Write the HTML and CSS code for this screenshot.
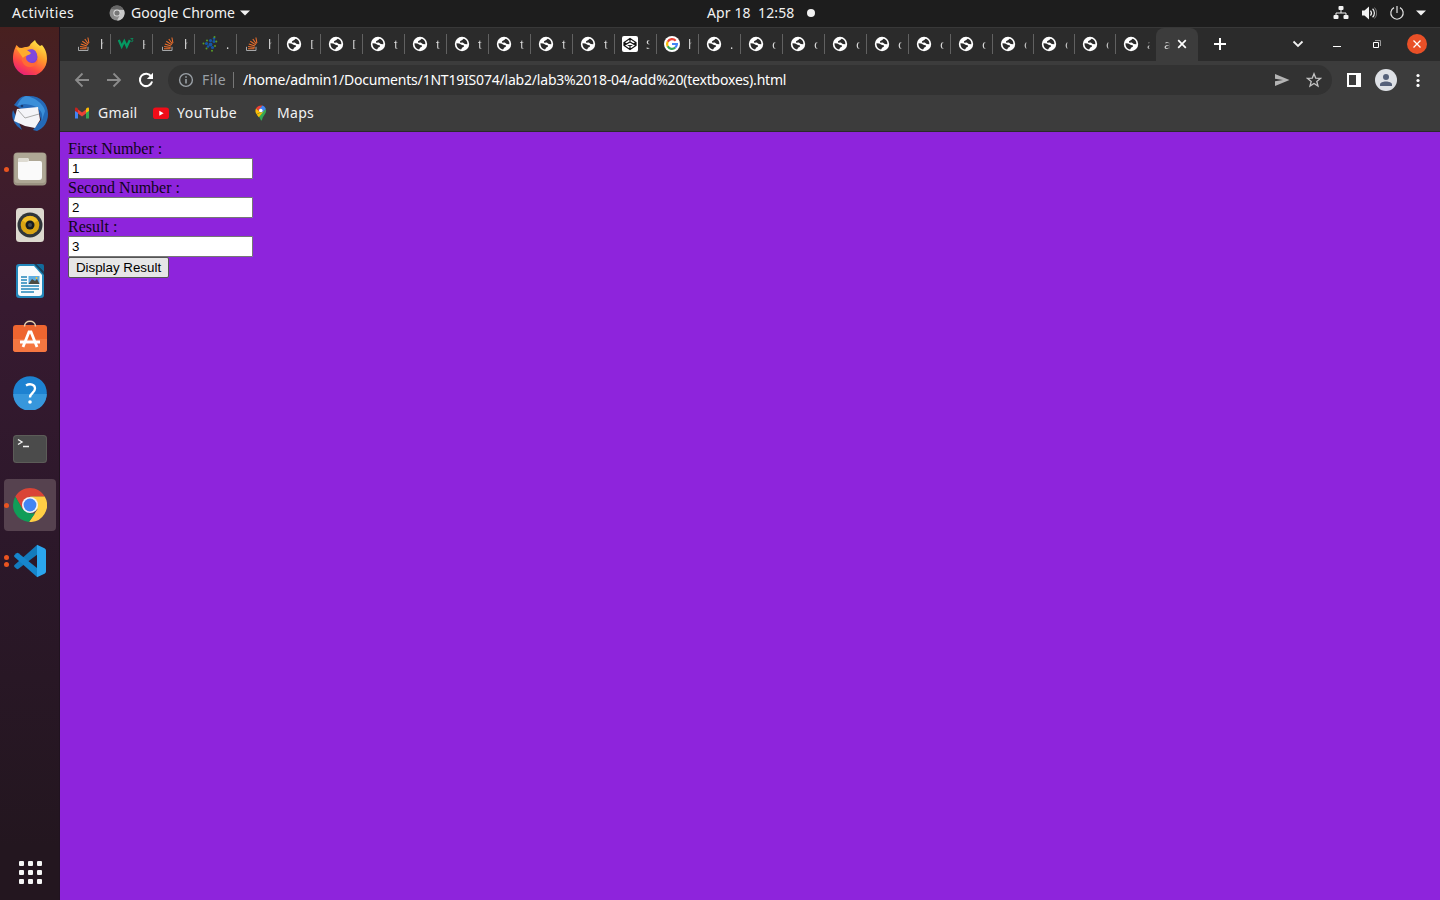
FILE: index.html
```html
<!DOCTYPE html>
<html lang="en">
<head>
<meta charset="utf-8">
<title>add (textboxes)</title>
<link rel="stylesheet" href="styles.css">
</head>
<body>
<svg class="defs" width="0" height="0">
  <symbol id="globe" viewBox="0 0 16 16"><circle cx="8" cy="8" r="7.200" fill="#fff"/><path d="M2.500 7.200 5.200 7.400 8 9l1.800.2.100 1.500-1.600.8-1.200 2C4.200 13 2.300 10.500 2.500 7.200z" fill="#2b2b2b"/><path d="M9.500 2.700 8.300 4 6 5.200l.2 1.500 2.500-.2L10.800 8l2.500.3C13.800 5.500 12 3.300 9.500 2.700z" fill="#2b2b2b"/></symbol>
  <symbol id="stack" viewBox="0 0 16 16"><path d="M2.500 10.800v3.700h9.500v-3.700" fill="none" stroke="#a5a7a9"/><path d="M4 12.700h6.500M4.100 10.600l6.600.8M4.800 8.100l6.200 2M6.300 5.300l5.500 3.600M8.800 3l3.600 5M11.900 1.500l1 5.500" stroke="#f0702c" stroke-width="1.050"/></symbol>
  <symbol id="w3" viewBox="0 0 16 16"><path d="M.8 4 3.700 10.500 6.300 5 8.800 10.500 11.800 4" fill="none" stroke="#059862" stroke-width="2.200"/><path d="M12.500 2.500H15l-1.300 1.500c2 0 1.500 2.300-1.200 1.500" fill="none" stroke="#059862" stroke-width=".8"/></symbol>
  <symbol id="dots" viewBox="0 0 16 16"><g fill="#1556a5"><circle cx="8.500" cy="4.500" r="1.600"/><circle cx="4.500" cy="7.500" r="1.600"/><circle cx="8.500" cy="8.500" r="1.900"/><circle cx="12" cy="5.500" r="1.500"/><circle cx="10.500" cy="11.500" r="1.600"/><circle cx="12" cy="2.500" r="1.300"/><circle cx="6" cy="10.500" r="1.300"/></g><g fill="#5a9c26"><circle cx="1.500" cy="7.500" r="1"/><circle cx="12.500" cy="1" r="1"/><circle cx="14.300" cy="5.500" r="1"/><circle cx="5" cy="4.500" r="1"/><circle cx="13" cy="10" r="1"/><circle cx="10" cy="14.800" r="1"/><circle cx="4.500" cy="12.500" r="1"/></g></symbol>
  <symbol id="codepen" viewBox="0 0 16 16"><rect width="16" height="16" rx="2" fill="#fff"/><path d="m8 2.500 6 4v3l-6 4-6-4v-3zm0 0v4m0 3v4M2 6.500 8 10l6-3.500M2 9.500 8 6l6 3.500" fill="none" stroke="#111" stroke-width="1.200"/></symbol>
  <symbol id="google" viewBox="0 0 16 16"><circle cx="8" cy="8" r="8" fill="#fff"/><g fill="none" stroke-width="2.200"><path d="M11.700 4.700A4.900 4.900 0 0 0 3.700 5.700" stroke="#ea4335"/><path d="M3.700 5.600a5 5 0 0 0 0 4.800" stroke="#fbbc05"/><path d="M3.700 10.300a4.900 4.900 0 0 0 7.500 1.400" stroke="#34a853"/><path d="M8 8h4.900a5 5 0 0 1-1.700 3.700" stroke="#4285f4"/></g></symbol>
</svg>

<header class="topbar">
  <span class="activities">Activities</span>
  <div class="appmenu">
    <svg width="16" height="16" viewBox="0 0 16 16"><circle cx="8" cy="8" r="7.500" fill="#8a8a8a"/><path d="M1.500 4A7.500 7.500 0 0 1 14.600 4.500H8z" fill="#666"/><path d="M15 5a7.500 7.500 0 0 1-7 10.500L11.500 9 10 5z" fill="#c8c8c8"/><circle cx="8" cy="8" r="3.600" fill="#ddd"/><circle cx="8" cy="8" r="2.600" fill="#777"/></svg>
    <span class="appname">Google Chrome</span>
    <svg class="caret" width="10" height="6" viewBox="0 0 10 6"><path d="M0 .5h10L5 5.500z" fill="#f2f2f2"/></svg>
  </div>
  <div class="clock"><span>Apr 18&nbsp; 12:58</span><i class="notice"></i></div>
  <div class="status">
    <svg width="16" height="16" viewBox="0 0 16 16"><path d="M8 4v4M3 12V8h10v4" fill="none" stroke="#f2f2f2"/><g fill="#f2f2f2"><rect x="5.500" y="1" width="5" height="4" rx="1"/><rect x="0.500" y="10" width="5" height="4" rx="1"/><rect x="10.500" y="10" width="5" height="4" rx="1"/></g></svg>
    <svg width="16" height="16" viewBox="0 0 16 16"><path d="M1 5.500h2.500L8 1.500v13l-4.500-4H1z" fill="#f2f2f2"/><path d="M9.500 5.500a4 4 0 0 1 0 5M11.600 3.700a6 6 0 0 1 0 8.600" fill="none" stroke="#f2f2f2" stroke-width="1.200"/><path d="M13.500 2.500a8 8 0 0 1 0 11" fill="none" stroke="#777"/></svg>
    <svg width="16" height="16" viewBox="0 0 16 16"><path d="M5 2.600a6.200 6.200 0 1 0 6 0M8 1v7" fill="none" stroke="#e2e2e2" stroke-width="1.200"/></svg>
    <svg class="caret" width="10" height="6" viewBox="0 0 10 6"><path d="M0 .5h10L5 5.500z" fill="#f2f2f2"/></svg>
  </div>
</header>

<div class="desktop">
  <nav class="dock">
    <div class="app"><svg width="36" height="36" viewBox="0 0 36 36"><defs><linearGradient id="ff" x1=".8" y1="0" x2=".25" y2="1"><stop offset="0" stop-color="#fff04a"/><stop offset=".4" stop-color="#ff9a2b"/><stop offset=".7" stop-color="#ff4b43"/><stop offset="1" stop-color="#e5197f"/></linearGradient></defs><path d="M4.500 6 8 9.500l5-1.500c3 .5 5-1 5.500-3L23 1c1 3 3 4 5 6l2-1c4 5 5 9 5 14A17 17 0 0 1 1 20C1 14 2 11 4.500 6z" fill="url(#ff)"/><circle cx="18" cy="18" r="7.500" fill="#7c3fd6"/><path d="M10 14l7 1c-4 5-1 9 3 9 3 0 5-2 6-4 0 5-4 8-8 8-6 0-10-6-8-14z" fill="#ff6a35"/><path d="M17 11c4-2 8 1 8 6s-4 6-7 6c-4-1-5-4-3-7z" fill="#8048dc"/><path d="M4 9c5-1 10 0 15 5-2 3-6 2-8 5z" fill="#ffac2d"/></svg></div>
    <div class="app"><svg width="38" height="38" viewBox="0 0 38 38"><path d="M3 11C8 5 9 2 16 2c13-1 21 7 21 18 0 8-4 14-11 17l-4-1 8-10-3-12-17 1z" fill="#2469b8"/><path d="M15 2c8 1 17 7 19 15l-4 12c4-10-1-18-17-19l-7 2C9 6 11 3 15 2z" fill="#3b8fd9"/><path d="M2 16c-2 6 0 11 4 16l5 4-3-7z" fill="#2469b8"/><path d="m6 15 21-2 2 13-5 8-10-2L3 27z" fill="#f4f4f8"/><path d="m7 16 7 8 14-4" fill="none" stroke="#aaa"/><circle cx="11" cy="12" r="1.300" fill="#183c70"/></svg></div>
    <div class="app one"><svg width="34" height="34" viewBox="0 0 34 34"><rect x=".5" y=".5" width="33" height="33" rx="4" fill="#9b9382"/><rect x="1.500" y="1" width="31" height="30" rx="3" fill="#aea795"/><path d="M5 8q0-2 2-2h7q2 0 2 3h11q2 0 2 2v14q0 3-3 3H8q-3 0-3-3z" fill="#fafafa"/><path d="M5 10V8q0-2 2-2h7q2 0 2 3l-2 1z" fill="#dedbd2"/></svg></div>
    <div class="app"><svg width="28" height="34" viewBox="0 0 28 34"><rect width="28" height="34" rx="3.500" fill="#ddd9cf"/><circle cx="14" cy="17" r="12.500" fill="#30363a"/><circle cx="14" cy="17" r="9.300" fill="#d9a413"/><path d="M14 17 6 12.500a9.300 9.300 0 0 1 16 0z" fill="#f0bd25"/><circle cx="14" cy="17" r="4.500" fill="#171c20"/><circle cx="14" cy="17" r="2" fill="#454b52"/></svg></div>
    <div class="app"><svg width="28" height="34" viewBox="0 0 28 34"><path d="M3 0h16l9 9v22q0 3-3 3H3q-3 0-3-3V3q0-3 3-3z" fill="#2387bb"/><path d="M4 2h14l8 9v18q0 3-3 3H5q-3 0-3-3V4q0-2 2-2z" fill="#f7fafc"/><path d="M20 0h6q2 0 2 2v6z" fill="#126a9b"/><path d="M18 0h2l8 8v3z" fill="#164461"/><path d="M5 13h6M5 16h6M5 19h6M5 22h18M5 25h18M5 28h13" stroke="#2385b8" stroke-width="1.500"/><rect x="12.500" y="12" width="11" height="8" fill="#5dade2"/><path d="m12.500 20 3.500-5 3 2 2-2 2.500 5z" fill="#4b4b43"/><circle cx="20.500" cy="14" r="1" fill="#f8c132"/></svg></div>
    <div class="app"><svg width="34" height="34" viewBox="0 0 34 34"><rect y="5" width="34" height="27" rx="3" fill="#ee6530"/><path d="M0 19h34v10q0 3-3 3H3q-3 0-3-3z" fill="#f57741"/><path d="M11.500 6.500c0-7 11-7 11 0" fill="none" stroke="#e9cfac" stroke-width="1.500"/><path d="m10 27 6-15h2l6 15M7 22h20" fill="none" stroke="#fff" stroke-width="2.800"/></svg></div>
    <div class="app"><svg width="34" height="34" viewBox="0 0 34 34"><circle cx="17" cy="17" r="16.800" fill="#1d82d1"/><path d="M.2 18h33.600a16.800 16.800 0 0 1-33.600 0z" fill="#3797dc"/><path d="M13 9.500c4-2.500 9-1 9 3 0 5-5 4-5 9" fill="none" stroke="#fff" stroke-width="2.300"/><circle cx="17" cy="26" r="1.800" fill="#fff"/></svg></div>
    <div class="app"><svg width="34" height="28" viewBox="0 0 34 28"><rect width="34" height="28" rx="3.500" fill="#5c5c58"/><rect x="1" y="1" width="32" height="26" rx="3" fill="#4b4b4b"/><path d="m5 4.500 4 2.500-4 2.500M10 11.500h6" fill="none" stroke="#f3f3f3" stroke-width="1.400"/></svg></div>
    <div class="app one active"><svg width="34" height="34" viewBox="0 0 34 34"><path d="M2.300 8.500A17 17 0 0 1 31.700 8.500H17L9.600 21.300z" fill="#da4437"/><path d="M31.700 8.500A17 17 0 0 1 16 34l8.400-12.700L17 8.500z" fill="#ffce45"/><path d="M2.300 8.500 9.600 21.300 17 25.500h5L16 34A17 17 0 0 1 2.300 8.500z" fill="#109d58"/><circle cx="17" cy="17" r="8" fill="#f4f4f4"/><circle cx="17" cy="17" r="6.400" fill="#4285f4"/></svg></div>
    <div class="app two"><svg width="34" height="34" viewBox="0 0 34 34"><path d="M24 1 1.500 21q-1 1 0 2l2 1.800q1 .7 2 0L25 10z" fill="#137bbd"/><path d="M5.500 9.200q-1-.7-2 0l-2 1.800q-1 1 0 2L24 33V24z" fill="#1686cd"/><path d="m24 .8 7.500 3.500Q33 5 33 6.500v21q0 1.500-1.500 2.200L24 33.300z" fill="#2ba5ee"/></svg></div>
    <div class="launcher"><i></i><i></i><i></i><i></i><i></i><i></i><i></i><i></i><i></i></div>
  </nav>

  <main class="browser">
    <div class="tabstrip">
      <div class="tab"><svg><use href="#stack"/></svg><span>h</span></div>
      <div class="tab"><svg><use href="#w3"/></svg><span>H</span></div>
      <div class="tab"><svg><use href="#stack"/></svg><span>h</span></div>
      <div class="tab"><svg><use href="#dots"/></svg><span>.</span></div>
      <div class="tab"><svg><use href="#stack"/></svg><span>h</span></div>
      <div class="tab"><svg><use href="#globe"/></svg><span>D</span></div>
      <div class="tab"><svg><use href="#globe"/></svg><span>D</span></div>
      <div class="tab"><svg><use href="#globe"/></svg><span>t</span></div>
      <div class="tab"><svg><use href="#globe"/></svg><span>t</span></div>
      <div class="tab"><svg><use href="#globe"/></svg><span>t</span></div>
      <div class="tab"><svg><use href="#globe"/></svg><span>t</span></div>
      <div class="tab"><svg><use href="#globe"/></svg><span>t</span></div>
      <div class="tab"><svg><use href="#globe"/></svg><span>t</span></div>
      <div class="tab"><svg><use href="#codepen"/></svg><span>S</span></div>
      <div class="tab"><svg><use href="#google"/></svg><span>h</span></div>
      <div class="tab"><svg><use href="#globe"/></svg><span>.</span></div>
      <div class="tab"><svg><use href="#globe"/></svg><span>c</span></div>
      <div class="tab"><svg><use href="#globe"/></svg><span>c</span></div>
      <div class="tab"><svg><use href="#globe"/></svg><span>c</span></div>
      <div class="tab"><svg><use href="#globe"/></svg><span>c</span></div>
      <div class="tab"><svg><use href="#globe"/></svg><span>c</span></div>
      <div class="tab"><svg><use href="#globe"/></svg><span>c</span></div>
      <div class="tab narrow"><svg><use href="#globe"/></svg><span>c</span></div>
      <div class="tab narrow"><svg><use href="#globe"/></svg><span>c</span></div>
      <div class="tab narrow"><svg><use href="#globe"/></svg><span>c</span></div>
      <div class="tab narrow last"><svg><use href="#globe"/></svg><span>a</span></div>
      <div class="tab current"><span>a</span><svg class="x" viewBox="0 0 10 10"><path d="m1.200 1.200 7.600 7.600m0-7.600L1.200 8.800" stroke="#fff" stroke-width="1.700"/></svg></div>
      <svg class="newtab" viewBox="0 0 12 12"><path d="M6 0v12M0 6h12" stroke="#fff" stroke-width="2"/></svg>
      <div class="wincontrols">
        <svg width="12" height="12" viewBox="0 0 12 12"><path d="m1.500 3.500 4.500 4.500 4.500-4.500" fill="none" stroke="#f1f1f1" stroke-width="1.800"/></svg>
        <svg width="8" height="8" viewBox="0 0 8 8"><path d="M0 6.500h8" stroke="#fff"/></svg>
        <svg width="8" height="8" viewBox="0 0 8 8"><path d="M.5 2.500h5v5h-5z" fill="none" stroke="#fff"/><path d="M2 .5h5.500V6" fill="none" stroke="#999"/></svg>
        <svg width="20" height="20" viewBox="0 0 20 20"><circle cx="10" cy="10" r="10" fill="#e95027"/><path d="m6.500 6.500 7 7m0-7-7 7" stroke="#fff" stroke-width="1.300"/></svg>
      </div>
    </div>

    <div class="toolbar">
      <div class="navicons">
        <svg width="16" height="16" viewBox="0 0 16 16"><path d="M15 8H2.500M8.500 1.500 2 8l6.500 6.500" fill="none" stroke="#8b8b8b" stroke-width="1.800"/></svg>
        <svg width="16" height="16" viewBox="0 0 16 16"><path d="M1 8h12.500M7.500 1.500 14 8l-6.500 6.500" fill="none" stroke="#8b8b8b" stroke-width="1.800"/></svg>
        <svg width="16" height="16" viewBox="0 0 16 16"><path d="M13.300 4.500a6.200 6.200 0 1 0 .8 5" fill="none" stroke="#fff" stroke-width="2"/><path d="M15 .8V7H8.800z" fill="#fff"/></svg>
      </div>
      <div class="omnibox">
        <svg width="16" height="16" viewBox="0 0 16 16"><circle cx="8" cy="8" r="6.400" fill="none" stroke="#9aa0a6" stroke-width="1.400"/><path d="M8 7v4.500M8 4.200v1.600" stroke="#9aa0a6" stroke-width="1.600"/></svg>
        <span class="scheme">File</span><i class="rule"></i><span class="url">/home/admin1/Documents/1NT19IS074/lab2/lab3%2018-04/add%20(textboxes).html</span>
        <div class="actions">
          <svg width="16" height="16" viewBox="0 0 16 16"><path d="M1 2l14.500 6L1 14V9.300L9 8 1 6.700z" fill="#b4b4b4"/></svg>
          <svg width="16" height="16" viewBox="0 0 16 16"><path d="m8 1.800 1.700 4.300 4.700.3-3.600 3 1.200 4.600L8 11.500 4 14l1.200-4.600-3.600-3 4.700-.3z" fill="none" stroke="#c4c4c4" stroke-width="1.300"/></svg>
        </div>
      </div>
      <div class="tools">
        <svg width="14" height="14" viewBox="0 0 14 14"><path d="M0 0h14v14H0zm2 2v10h7V2z" fill="#fff" fill-rule="evenodd"/></svg>
        <svg width="22" height="22" viewBox="0 0 22 22"><circle cx="11" cy="11" r="11" fill="#dee1e6"/><circle cx="11" cy="8" r="3" fill="#55617a"/><path d="M5 17v-1.500c0-4 12-4 12 0V17z" fill="#55617a"/></svg>
        <svg width="4" height="14" viewBox="0 0 4 14"><g fill="#fff"><circle cx="2" cy="2.500" r="1.600"/><circle cx="2" cy="7.500" r="1.600"/><circle cx="2" cy="12.400" r="1.600"/></g></svg>
      </div>
    </div>

    <div class="bookmarks">
      <div class="mark gmail"><svg width="16" height="16" viewBox="0 0 16 16"><path d="M1 4v9.500h3V6z" fill="#4285f4"/><path d="M15 4v9.500h-3V6z" fill="#34a853"/><path d="M4 4.500 8 7.500l4-3v4l-4 3-4-3z" fill="#ea4335"/><path d="M1 3.700c0-1.700 1.500-1.700 3 0v4L1 6z" fill="#c5221f"/><path d="M15 3.700c0-1.700-1.500-1.700-3 0v4L15 6z" fill="#fbbc04"/></svg><span>Gmail</span></div>
      <div class="mark youtube"><svg width="16" height="16" viewBox="0 0 16 16"><rect y="2.500" width="16" height="11.500" rx="2.800" fill="#f00c18"/><path d="M6.300 5.800v4.900l4.300-2.450z" fill="#fff"/></svg><span>YouTube</span></div>
      <div class="mark maps"><svg width="16" height="16" viewBox="0 0 16 16"><path d="M3.700 9.500 12.800 4c1.500 4-2.500 6-3.500 10q-.8 3-2 0c-.5-2-2.500-3-3.600-4.500z" fill="#34a853"/><path d="M3.500 9.200 8 7l-5-3.500C2 5.500 2.300 7.500 3.500 9.200z" fill="#fbbc04"/><path d="m3.700 9.500 2.100 2.700L11 6z" fill="#fbbc04"/><path d="M2.900 3.500 6 6l3.500-5.500C7 0 4.300 1 2.900 3.500z" fill="#ea4335"/><path d="M9.500.5 5.500 5 9 7.500 12.800 4C12.300 2 11 1 9.500.5z" fill="#4285f4"/><circle cx="7.800" cy="5.500" r="1.800" fill="#fff"/></svg><span>Maps</span></div>
    </div>

    <section class="page">
      <form>
        <label for="a">First Number :</label>
        <input id="a" type="text" value="1">
        <label for="b">Second Number :</label>
        <input id="b" type="text" value="2">
        <label for="c">Result :</label>
        <input id="c" type="text" value="3">
        <button type="button">Display Result</button>
      </form>
    </section>
  </main>
</div>
</body>
</html>
```
FILE: styles.css
```css
* { box-sizing: border-box; }
body {
  margin: 0;
  width: 1440px;
  height: 900px;
  overflow: hidden;
  display: flex;
  flex-direction: column;
  font-family: "Noto Sans", "Open Sans", sans-serif;
  color: #f2f2f2;
}
svg { display: block; flex: none; }
.defs { position: absolute; }

.topbar {
  height: 27px;
  flex: none;
  display: grid;
  grid-template-columns: 109px 598px 1fr auto;
  align-items: center;
  background: #1d1d1d;
  font-size: 14px;
  line-height: 26px;
  padding: 0 14px 1px 0;
}
.activities { padding-left: 12px; letter-spacing: .38px; }
.appmenu, .clock, .status { display: flex; align-items: center; }
.appname { margin: 0 5px 0 6px; letter-spacing: .05px; }
.clock { letter-spacing: .1px; }
.notice { width: 8px; height: 8px; border-radius: 50%; background: #f2f2f2; margin-left: 13px; }
.status { gap: 12px; }
.status .caret { margin-left: -1px; }

.desktop { flex: 1; display: flex; min-height: 0; }
.dock {
  width: 60px;
  flex: none;
  display: flex;
  flex-direction: column;
  align-items: center;
  gap: 4px;
  padding: 4px 0 14px;
  background: linear-gradient(#48201f 0, #441f28 70px, #371a30 280px, #2d182b 480px, #23161f 820px);
  border-right: 1px solid #20131f;
}
.app {
  position: relative;
  width: 52px;
  height: 52px;
  margin-left: 1px;
  border-radius: 4px;
  display: flex;
  align-items: center;
  justify-content: center;
}
.app.active { background: #56424f; }
.one::before, .two::before {
  content: "";
  position: absolute;
  left: 0;
  top: 24px;
  width: 5px;
  height: 5px;
  border-radius: 50%;
  background: #e95420;
}
.two::before { top: 20px; box-shadow: 0 7px #e95420; }
.launcher {
  margin: auto 0 0 2px;
  display: grid;
  grid-template-columns: repeat(3, 5px);
  gap: 4px;
  padding-bottom: 2px;
}
.launcher i { width: 5px; height: 5px; border-radius: 1px; background: #f5f5f5; }

.browser { flex: 1; min-width: 0; display: flex; flex-direction: column; }
.tabstrip {
  height: 34px;
  flex: none;
  display: flex;
  align-items: center;
  padding: 0 0 1px 9px;
  background: #2b2b2b;
  border-top: 1px solid #383838;
}
.tab {
  width: 42px;
  height: 20px;
  flex: none;
  display: flex;
  align-items: center;
  gap: 8px;
  padding-left: 7px;
  border-right: 1px solid #616161;
  font-size: 13px;
  line-height: 20px;
  color: #dcdcdc;
}
.tab svg { width: 16px; height: 16px; }
.tab span {
  width: 4px;
  overflow: hidden;
  -webkit-mask-image: linear-gradient(90deg, #000 40%, transparent);
  mask-image: linear-gradient(90deg, #000 40%, transparent);
}
.narrow { width: 41px; }
.narrow span { width: 3px; }
.last { border-right-color: transparent; }
.tab.current {
  height: 33px;
  margin: 0 0 -1px -1px;
  padding: 0 0 1px 8px;
  border: 0;
  border-radius: 8px 8px 0 0;
  background: #3c3c3c;
  gap: 7px;
}
.current span { width: 6px; }
.tab .x { width: 10px; height: 10px; }
.newtab { width: 12px; height: 12px; margin-left: 16px; }
.wincontrols { margin-left: auto; display: flex; align-items: center; padding-right: 13px; }
.wincontrols svg:nth-child(2) { margin-left: 29px; }
.wincontrols svg:nth-child(3) { margin-left: 32px; }
.wincontrols svg:nth-child(4) { margin-left: 26px; }

.toolbar {
  height: 37px;
  flex: none;
  display: flex;
  align-items: center;
  background: #3c3c3c;
}
.navicons { display: flex; gap: 16px; padding: 0 14px; }
.omnibox {
  width: 1164px;
  height: 30px;
  display: flex;
  align-items: center;
  padding: 0 10px;
  border-radius: 15px;
  background: #323232;
  font-size: 14px;
}
.scheme { color: #9aa0a6; margin-left: 8px; width: 31px; letter-spacing: .4px; }
.rule { width: 1px; height: 16px; background: #777; margin-right: 9px; }
.url { color: #fff; letter-spacing: -.2px; white-space: nowrap; }
.actions { margin-left: auto; display: flex; gap: 16px; }
.tools { display: flex; align-items: center; padding-left: 15px; gap: 14px; }
.tools svg:nth-child(3) { margin-left: 5px; }

.bookmarks {
  height: 34px;
  flex: none;
  display: flex;
  padding: 0 14px 4px;
  background: #3c3c3c;
  border-bottom: 1px solid #2a2a2a;
  font-size: 14px;
}
.mark { display: flex; align-items: center; gap: 8px; }
.gmail { width: 79px; letter-spacing: .2px; }
.youtube { width: 100px; letter-spacing: .52px; }
.maps { letter-spacing: .3px; }

.page {
  flex: 1;
  padding: 8px;
  background: #8e24dc;
  color: #000;
  font: 16px/18px "Liberation Serif", serif;
}
.page form { display: flex; flex-direction: column; align-items: flex-start; }
.page label { color: #100418; }
.page input {
  width: 185px;
  height: 21px;
  padding: 1px 3px;
  border: 1px solid #767676;
  border-radius: 1px;
  background: #fff;
  color: #000;
  font: 13.333px "Liberation Sans", sans-serif;
}
.page button {
  width: 101px;
  height: 21px;
  padding: 0;
  border: 1px solid #555;
  border-radius: 2px;
  background: #e6e6e6;
  color: #000;
  font: 13.333px "Liberation Sans", sans-serif;
}
```
